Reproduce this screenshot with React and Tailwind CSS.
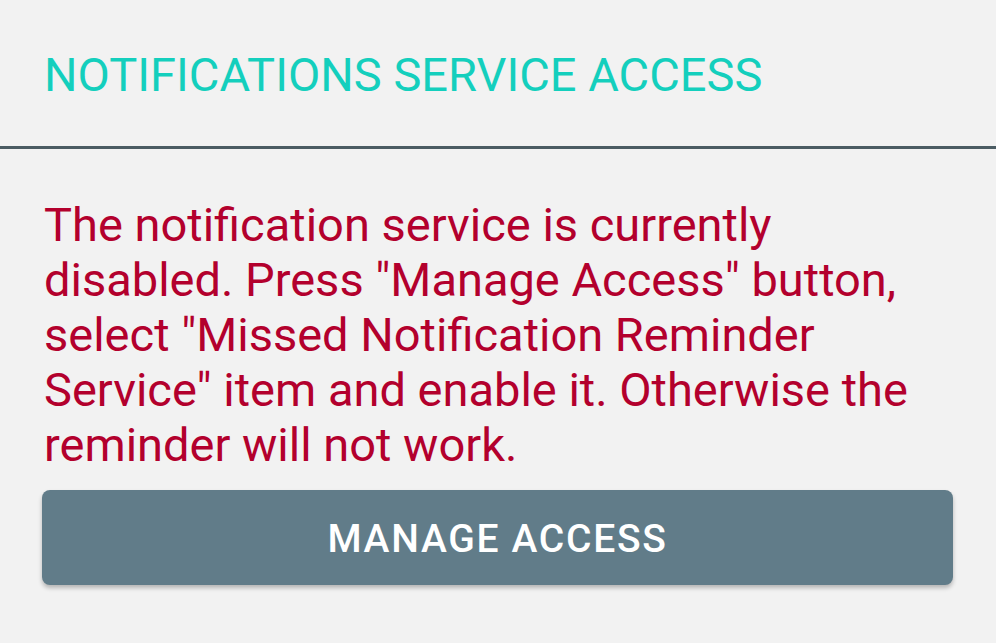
export default function App() {
  return (
    <div className="w-[996px] h-[643px] bg-[#f2f2f2] overflow-hidden" style={{ fontFamily: "Roboto, sans-serif" }}>
      <div className="h-[146px] pt-[51px] pl-[44px]">
        <h1 className="text-[47px] leading-none text-[#14cfbd] font-normal">NOTIFICATIONS SERVICE ACCESS</h1>
      </div>
      <div className="h-[3px] bg-[#4b5c63]" />
      <div className="px-[42px] pt-[48px]">
        <p className="text-[47px] leading-[55px] text-[#b3002d] pl-[2px] w-[880px]">
          The notification service is currently disabled. Press "Manage Access" button, select "Missed Notification Reminder Service" item and enable it. Otherwise the reminder will not work.
        </p>
        <button className="mt-[18px] w-[911px] h-[95px] rounded-[8px] bg-[#617c89] text-white text-[39px] font-medium tracking-[1.7px] pt-[3px] shadow-[0_3px_4px_rgba(0,0,0,0.25)] flex items-center justify-center">
          MANAGE ACCESS
        </button>
      </div>
    </div>
  );
}
